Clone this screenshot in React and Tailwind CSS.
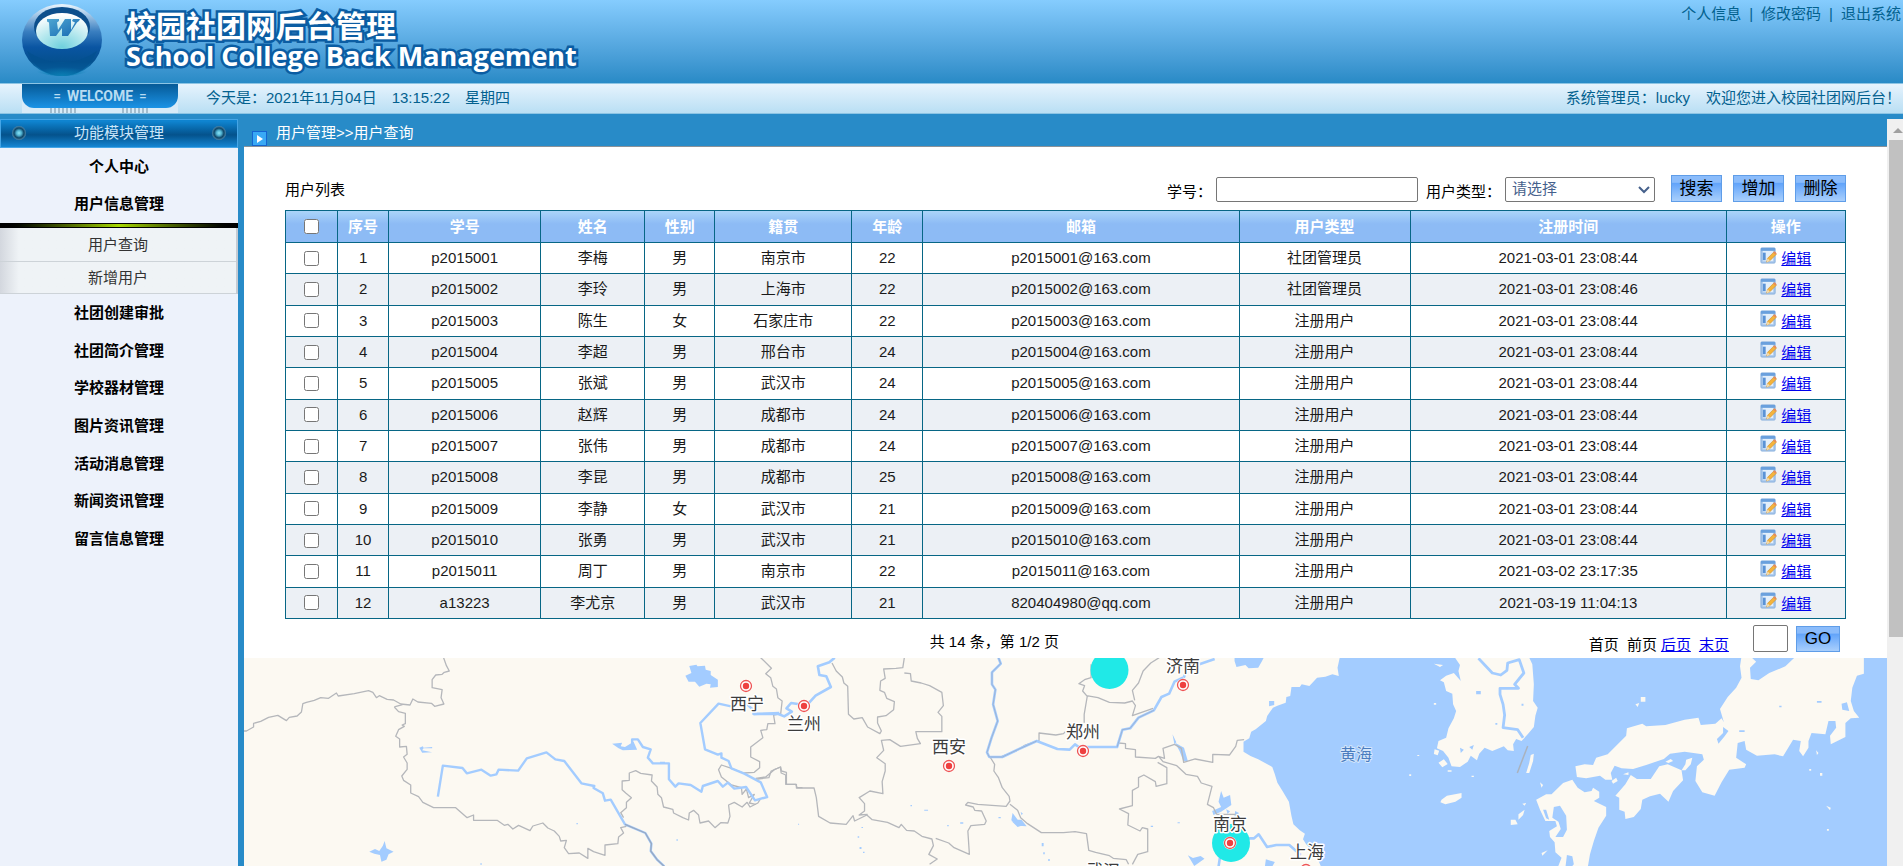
const users = [
  ['p2015001', '李梅', '男', '南京市', 22, 'p2015001@163.com', '社团管理员', '2021-03-01 23:08:44'],
  ['p2015002', '李玲', '男', '上海市', 22, 'p2015002@163.com', '社团管理员', '2021-03-01 23:08:46'],
  ['p2015003', '陈生', '女', '石家庄市', 22, 'p2015003@163.com', '注册用户', '2021-03-01 23:08:44'],
  ['p2015004', '李超', '男', '邢台市', 24, 'p2015004@163.com', '注册用户', '2021-03-01 23:08:44'],
  ['p2015005', '张斌', '男', '武汉市', 24, 'p2015005@163.com', '注册用户', '2021-03-01 23:08:44'],
  ['p2015006', '赵辉', '男', '成都市', 24, 'p2015006@163.com', '注册用户', '2021-03-01 23:08:44'],
  ['p2015007', '张伟', '男', '成都市', 24, 'p2015007@163.com', '注册用户', '2021-03-01 23:08:44'],
  ['p2015008', '李昆', '男', '成都市', 25, 'p2015008@163.com', '注册用户', '2021-03-01 23:08:44'],
  ['p2015009', '李静', '女', '武汉市', 21, 'p2015009@163.com', '注册用户', '2021-03-01 23:08:44'],
  ['p2015010', '张勇', '男', '武汉市', 21, 'p2015010@163.com', '注册用户', '2021-03-01 23:08:44'],
  ['p2015011', '周丁', '男', '南京市', 22, 'p2015011@163.com', '注册用户', '2021-03-02 23:17:35'],
  ['a13223', '李尤京', '男', '武汉市', 21, '820404980@qq.com', '注册用户', '2021-03-19 11:04:13'],
];

const columns = [
  { label: '序号', width: 'w-[51px]' },
  { label: '学号', width: 'w-[152px]' },
  { label: '姓名', width: 'w-[104px]' },
  { label: '性别', width: 'w-[70px]' },
  { label: '籍贯', width: 'w-[137px]' },
  { label: '年龄', width: 'w-[71px]' },
  { label: '邮箱', width: 'w-[316px]' },
  { label: '用户类型', width: 'w-[171px]' },
  { label: '注册时间', width: 'w-[316px]' },
  { label: '操作', width: 'w-[119px]' },
];

function Logo() {
  return (
    <svg width="80" height="74" viewBox="0 0 80 74" aria-hidden="true">
      <defs>
        <linearGradient id="ball" x1="0" y1="0" x2="0" y2="1">
          <stop offset="0" stopColor="#eef6fd" />
          <stop offset="0.14" stopColor="#a9cbe9" />
          <stop offset="0.38" stopColor="#3a7fc0" />
          <stop offset="0.6" stopColor="#0a55a2" />
          <stop offset="0.8" stopColor="#04508f" />
          <stop offset="1" stopColor="#1284c0" />
        </linearGradient>
        <radialGradient id="glow" cx="0.5" cy="1" r="0.5">
          <stop offset="0" stopColor="#0a7fb4" />
          <stop offset="1" stopColor="#0a7fb4" stopOpacity="0" />
        </radialGradient>
        <radialGradient id="lens" cx="0.5" cy="0.95" r="0.9">
          <stop offset="0" stopColor="#6fd0dd" />
          <stop offset="0.5" stopColor="#b5e8ee" />
          <stop offset="1" stopColor="#ffffff" />
        </radialGradient>
        <linearGradient id="mark" x1="0" y1="0" x2="1" y2="1">
          <stop offset="0" stopColor="#4fa7d2" />
          <stop offset="1" stopColor="#1668b2" />
        </linearGradient>
      </defs>
      <ellipse cx="40" cy="37" rx="40" ry="36" fill="url(#ball)" />
      <path d="M5 48 Q40 72 75 48 Q64 73 40 73 Q16 73 5 48Z" fill="#03508f" opacity="0.7" />
      <ellipse cx="40" cy="64" rx="30" ry="9" fill="url(#glow)" />
      <ellipse cx="40" cy="24" rx="28" ry="20" fill="#0c4f8c" />
      <ellipse cx="40" cy="28" rx="26" ry="18" fill="url(#lens)" />
      <path
        fill="url(#mark)"
        d="M25 16H37V18L35 19.500 36 27 43 16H49L49 27 53 19.500 50 18 51 16H58L57 18 55 19.500 46 33H40L40 25 34 33H28L27 19.500 25 18.500Z"
      />
    </svg>
  );
}

function EditIcon() {
  return (
    <svg className="mr-1 inline align-baseline" width="17" height="17" viewBox="0 0 18 18" aria-hidden="true">
      <rect x="1" y="1" width="15" height="16" rx="1" fill="#a9c8ec" stroke="#86aedd" />
      <rect x="3" y="4" width="11" height="11" fill="#e3effb" />
      <rect x="1" y="1" width="15" height="3" fill="#6aa0dd" />
      <rect x="3" y="6" width="3" height="8" fill="#5b93d6" />
      <path d="M7 16l1-4 7-7 2.500 2.500-7 7z" fill="#f4b43c" stroke="#c98a2b" strokeWidth="0.6" />
      <path d="M8 12l2.500 2.500-3.500 2z" fill="#f3dcae" />
      <path d="M14 6l1.500-1.500 2 2-1.500 1.500z" fill="#e88a5c" />
    </svg>
  );
}

function Rivet() {
  return (
    <svg width="16" height="16" viewBox="0 0 16 16" aria-hidden="true">
      <defs>
        <radialGradient id="rivet">
          <stop offset="0" stopColor="#8be6f5" />
          <stop offset="0.35" stopColor="#52b4d4" />
          <stop offset="0.7" stopColor="#0c4568" />
          <stop offset="1" stopColor="#4f86a8" />
        </radialGradient>
      </defs>
      <circle cx="8" cy="8" r="7" fill="url(#rivet)" />
    </svg>
  );
}

const cities = [
  { name: '西宁', x: 746, y: 685, tx: 747, ty: 709 },
  { name: '兰州', x: 804, y: 705, tx: 804, ty: 729 },
  { name: '西安', x: 949, y: 765, tx: 949, ty: 752 },
  { name: '郑州', x: 1083, y: 750, tx: 1083, ty: 737 },
  { name: '济南', x: 1183, y: 684, tx: 1183, ty: 671 },
  { name: '南京', x: 1230, y: 842, tx: 1230, ty: 829 },
  { name: '上海', x: 1306, y: 869, tx: 1307, ty: 857 },
  { name: '武汉', x: 1103, y: 889, tx: 1103, ty: 876 },
];

function Map() {
  return (
    <svg
      className="block min-h-0 w-full flex-1 bg-[#a3ccff] [&_path]:[vector-effect:non-scaling-stroke]"
      viewBox="244 657 1643 209"
      preserveAspectRatio="xMidYMin slice"
      role="img"
      aria-label="用户籍贯分布地图"
      strokeLinejoin="round"
    >
      {/* mainland */}
      <g transform="translate(900 560) scale(.63966 .33333)">
        <path
          fill="#fcf9f2"
          d="M-1040 285H523V300L526 318 540 312 545 322 560 320 566 300 570 285H688L684 320 686 345 676 340 665 347 652 350 640 375 628 370 625 378 612 378 610 405 604 408 603 425 590 434 583 440 574 465 572 480 556 505 549 512 546 532 537 542 537 572 548 585 560 595 570 605 582 618 586 640 590 665 598 690 608 722 612 765 615 790 625 808 633 818 630 835 635 850 650 880 660 925H-1040Z"
        />
        <path
          fill="#a3ccff"
          d="M577 420l8 0 0 12-8 4zM426 520l3 30 3-6zM430 545l14 15 6 40-7 0-6-30zM502 690l4 20 10-8 2 30-16 20-12 10-2-12 14-12-4-16zM524 750l6 6-2 30-6-6zM450 883l8 8 12-6 6 8-16 22zM572 895l14 8-6 20h-10zM176 756l8 20 6 0 8 20-14-2-10-16zM510 745l6 6-4 8z"
        />
      </g>

      {/* western region */}
      <g transform="translate(240 640) scale(.35714 .33333)" fill="none">
        <g stroke="#b5b7bb" strokeWidth="1.3">
          <path d="M0 270H18L38 258V247L58 241 80 229 106 223 130 239 138 229 160 225 172 213 176 188 186 184 208 178 226 170 248 172 270 156 275 165 320 158 360 149 372 154 382 170 390 164 412 175 430 177 450 189 476 192 484 174 498 183 536 187 545 196 571 189 563 170 566 146 538 140V116L548 102 566 100 572 94 586 90 578 74 570 50" />
          <path d="M432 198L455 191M432 198L444 212 463 217V248L454 252 460 256 444 266 436 286 447 294V318L466 316 468 340 458 348 468 366V385L453 405 458 418 478 432V456L500 467 512 484 542 500H604L620 515 636 530 654 522V538H720L740 553 750 550 764 564 780 553 812 569 820 555 848 546 862 561 880 570 894 586 898 600 914 598 908 620 920 638 950 636 974 652V622L990 632 1022 643V612L1058 608 1060 588 1074 576 1066 560 1082 556" />
          <path d="M1074 530L1066 515 1082 500V484L1096 470 1080 456 1070 446V420L1090 418 1090 396 1108 389 1122 397 1154 402 1152 420 1168 438 1170 460 1180 470 1186 498 1212 505 1214 516 1240 530 1256 537 1258 516 1270 508 1284 522 1288 546 1312 540 1330 560 1346 545 1366 546 1372 526 1368 492 1384 484 1406 498 1420 484 1428 498 1450 486 1456 476" />
          <path d="M1458 50L1488 82 1472 98 1486 110 1492 136 1502 144 1506 170 1518 180 1514 218 1494 222 1498 248 1478 248 1475 266 1458 268 1464 290 1430 318V348L1455 362V380L1440 394 1410 396 1370 380 1348 372 1340 386 1348 408 1376 432 1404 440 1406 460 1418 444 1424 470 1440 460 1426 486 1444 490" />
          <path d="M1444 412L1472 408 1496 386 1514 378 1516 390 1530 394V430H1556L1560 440H1575" />
        </g>
        <g stroke="#a3ccff" strokeWidth="2.4">
          <path d="M554 467L568 374 623 381 635 397 676 386 702 404 718 400 724 386 779 389 803 352 858 334 883 355 908 360 956 427 992 435 990 441 1016 457 1022 479 1038 476 1078 550 1135 576 1152 608 1150 630 1168 656 1188 676" />
          <path d="M1098 310V295H1114L1128 318 1150 325 1142 350 1156 367H1201V415L1219 437 1228 427 1262 432 1292 452 1296 435 1338 420 1352 437 1366 425 1384 443 1417 438 1442 478 1476 468 1458 424 1412 398 1376 382 1368 360 1348 350V337L1338 341 1302 325 1289 246 1340 188 1375 196M1400 180L1420 190 1440 210 1440 219 1510 216" />
        </g>
        <path stroke="#9aa9c0" strokeWidth="1.3" d="M1078 550L1135 576 1152 608 1150 630 1168 656 1192 680" />
        <path
          fill="#a3ccff"
          d="M1258 75L1278 71 1281 76 1302 74 1304 86 1318 90V102L1338 116V138L1316 140 1318 130 1306 128 1286 137 1274 122 1256 122 1247 104 1264 96zM1042 308L1070 305 1066 316 1078 318 1102 302 1112 326 1072 328 1060 322zM362 632L378 624 390 630 400 614 405 600 410 622 430 632 416 640 410 656 396 662 392 642 376 638zM502 320L512 316 514 320 538 318V322H514L510 328 538 334 510 335zM942 546h4v4h-4zM1222 595h4v4h-4zM673 667h4v4h-4zM1176 362h14v4h-14z"
        />
      </g>

      {/* central and eastern provinces */}
      <g transform="translate(700 650) scale(.38265 .33333)" fill="none">
        <g stroke="#b5b7bb" strokeWidth="1.3">
          <path d="M345 36L356 60 372 78 376 96 386 106 388 190 402 204 424 200 438 228 470 248 474 240 464 216V198L486 194 506 176 508 152 488 142 482 124 470 118 472 90 484 82 480 54 512 52 530 50 534 20M534 66L550 68 552 90 578 96 600 104 632 124 636 164 622 184 632 196V242H564L568 262 576 278 524 286 496 266 474 268 480 298 462 320 484 338V360L476 392 478 428 444 420 416 440 430 458V480L416 492 438 490" />
          <path d="M150 384L180 380 186 360 210 348 212 366 224 372V400H252V411H298L304 440 310 496 340 516 382 520 400 494 404 510 436 492 450 506 490 514 520 530 526 520 540 538 560 540 580 556 606 564 610 584 598 610 620 624 600 640M616 562L650 576 664 590 704 610 700 540 708 524 744 520 748 510 736 480 718 478 714 468 694 462 700 454 726 460 800 466 810 450 808 436 790 410 780 380 768 360 770 340 758 318" />
          <path d="M810 460L830 478 838 500 856 518 892 545H950L980 542 1010 548 1016 598 1034 604 1070 614 1080 622 1114 626 1120 640M1130 640L1144 610 1170 602V534L1156 530 1150 540 1118 522 1120 488 1096 474 1130 464V418L1146 408V380L1160 372 1190 392 1192 406 1220 398V350L1196 334" />
          <path d="M756 318H784L826 300 850 282 886 268V246L930 252 950 248 955 242M1004 215V190L1012 136 1000 120 1005 104 990 98 1005 86 1022 80V40M1010 134L1040 140 1070 154 1110 156 1130 150 1138 164 1130 194 1184 172M1136 148L1130 118 1146 96 1158 60 1178 36 1200 20" />
          <path d="M1094 276L1112 278 1112 292 1138 296V318L1190 322 1198 316 1214 322 1210 292 1240 280 1258 292 1264 334 1294 324 1340 334V310L1384 312 1400 286 1404 268 1422 266M1200 318L1210 332 1246 344 1270 370 1300 376 1310 396 1338 406 1326 460 1342 470 1350 490M1350 490H1405V500" />
        </g>
        <g stroke="#a3ccff" strokeWidth="2.6">
          <path d="M140 180V189H205L220 196 240 182 226 172 238 156 260 160 286 154 302 134 342 108 330 76 312 72 308 46 338 34 352 20" />
          <path d="M780 20L786 38 763 64V100L772 116 766 160 778 210 762 260 750 304 756 318H790L830 296 880 270 934 294 966 296 980 280 990 288H1090L1104 236 1124 232 1146 200 1186 178 1206 138 1226 128 1240 92 1262 80M1305 40L1345 24M1264 80L1270 64" />
          <path d="M1430 562H1448L1460 550 1482 588 1506 582H1540L1570 612M1360 610L1355 648" />
        </g>
        <path stroke="#98a8c3" strokeWidth="1" strokeOpacity="0.7" d="M780 20L786 38 763 64V100L772 116 766 160 778 210 762 260 750 304 756 318H790L830 296 880 270M1090 288L1104 236 1124 232 1146 200 1186 178" />
        <path fill="#a3ccff" d="M550 462h4v4h-4zM586 476h10v3h-10zM646 522h4v4h-4zM680 514h8v4h-8zM256 518h3v3h-3zM422 528h4v3h-4zM412 556h4v4h-4zM417 588h5v6h-5zM426 602h4v4h-4zM893 576h5v10h-5zM897 604h4v6h-4zM910 624h4v6h-4zM814 510l12 6 14 8-10 4zM838 482l6 6-4 4zM780 498h6v4h-6zM1178 524h6v4h-6zM1248 514h6v3h-6zM1486 630l10 6-10 10z" />
      </g>

      {/* Korea, Japan and the islands */}
      <g transform="translate(1300 640) scale(.38462 .33333)" fill="none">
        <path
          fill="#fcf9f2"
          d="M400 45H594L604 70 608 130 606 180 618 200 612 224 608 258 592 280 576 300 562 294 554 310 556 330 540 328 530 316 500 330 480 320 466 338 460 358 444 344 436 362 416 378 394 376 386 350 372 330 356 322 360 300 380 290 386 262 400 232 406 210 398 190 396 158 380 150 374 124 364 118 380 104 400 96 418 120 412 90 416 72z"
        />
        <path fill="#fcf9f2" d="M350 325l12 4-4 14-10-4zM360 365l14-10 10 14-14 10zM384 388h10v4h-10zM348 68l24 4-8 6zM446 404h6v4h-6zM284 400h5v5h-5zM305 342h5v3h-5zM348 186h6v5h-6z" />
        <path fill="#fcf9f2" d="M368 476L382 464 420 456 420 470 404 482 378 490 365 484zM600 342L608 338 606 360 596 396 588 396 596 366zM886 168h12v14h-12zM872 190l10-4-4 12zM624 424l8 8-4 8zM548 536l12 0 6 14-18 2zM568 520l16-14-4 16-12 14zM578 488l10-2-4 8zM628 636l16-8-14 16zM1342 328l6 8-4 6zM1352 396h6v8h-6zM1368 494l12 6-2 8zM1370 564h5v5h-5zM1324 384h5v5h-5z" />
        <path
          fill="#fcf9f2"
          d="M1148 45H1170L1186 62 1170 80 1172 114 1192 118 1220 96 1262 76 1290 45H1466V98L1448 104 1436 140 1432 180 1440 210 1454 230 1432 232 1418 246V288L1380 310 1378 284 1394 260 1392 240 1374 240 1366 280 1330 276 1322 300 1322 320 1308 346 1298 330 1302 300 1282 296 1256 346 1234 340 1188 344 1160 326 1156 300 1138 306 1134 350 1160 370 1156 380 1116 386 1096 424 1078 464 1046 454 1028 420 1032 376 1050 356 1046 340 1000 332 962 338 946 354 900 372 866 384 836 382 818 374 808 396 812 416 794 416 780 404 744 412 720 408 716 376 740 370 762 372 770 350 800 340 848 284 850 262 890 248 900 256 950 252 1000 236 1036 230 1042 252 1080 248 1096 232 1102 244 1092 204 1112 168 1134 140 1148 110 1144 76z"
        />
        <path fill="#fcf9f2" d="M934 376L956 370 992 388 996 418 970 450 958 482 936 458 910 466 890 476 886 504 868 528 846 534 844 512 830 506V470L820 464 846 430 860 402 876 414 912 414zM1004 356l16-6-4 20-14 18-10 0 10-18zM950 362l14-8 6 6-12 6zM810 420l12-10 4 10-12 8zM840 400l14-6 0 8z" />
        <path
          fill="#fcf9f2"
          d="M684 426L708 416 722 440 740 454 758 450 762 440 778 452V470L764 480 796 498V524L776 560 764 600 754 640 748 680H670L680 650 664 634 662 604 650 588 648 570 668 556 664 540 638 540 624 506 614 476 640 460 654 460z"
        />
        <path fill="#a3ccff" d="M1100 258l14 12-10 16-16 22-4-14 16-18zM660 498l16-4 16 30 2 42-10 22-20 0 14-24-6-22-16-12zM632 506l8 0 8 30-8-4zM694 642l14 4 4 24-8 10h-14zM458 150h12v10h-12zM1246 194h6v5h-6zM1142 268h14v5h-14zM1408 188l14-4 6 26-18-4zM1344 180h12v5h-12zM576 188h5v6h-5zM508 246h5v5h-5zM416 320l10 6-8 10zM440 318l12-6-4 14z" />
        <path stroke="#a3ccff" strokeWidth="2.8" d="M464 52L500 96 522 102 538 88 540 66 570 56 582 96 558 130 568 142 520 142 520 160 528 190 532 222 528 260 566 266 580 290" />
        <path stroke="#aab2be" strokeWidth="1.5" d="M592 315L565 396" />
      </g>

      <circle cx="1109.500" cy="669" r="19" fill="#20e9e7" />
      <circle cx="1231" cy="842" r="19" fill="#20e9e7" />

      {cities.map((c) => (
        <g key={c.name}>
          <circle cx={c.x} cy={c.y} r="6.500" fill="#fff" />
          <circle cx={c.x} cy={c.y} r="5.500" fill="none" stroke="#ee5555" strokeWidth="1.300" />
          <circle cx={c.x} cy={c.y} r="3.200" fill="#ee4040" />
          <text x={c.tx} y={c.ty} textAnchor="middle" fontSize="17" fill="#3c3c3c" stroke="#fff" strokeWidth="3" paintOrder="stroke">
            {c.name}
          </text>
        </g>
      ))}
      <text x="1356" y="759" textAnchor="middle" fontSize="16" fill="#4a7dc0" stroke="#d5e6fb" strokeWidth="2" paintOrder="stroke">
        黄海
      </text>
    </svg>
  );
}

const titleText =
  "font-['Open_Sans','Noto_Sans_CJK_SC',sans-serif] font-bold text-white [paint-order:stroke_fill] [-webkit-text-stroke:5px_#0b5da3]";
const buttonStyle =
  'border border-[#5f9de8] bg-linear-to-b from-[#8bbcfb] from-25% via-[#62a4fa] via-30% to-[#a9cffc] text-[17px] leading-6 text-black';

function MenuItem({ children }) {
  return (
    <a href="#" className="flex items-center justify-center font-bold text-black">
      {children}
    </a>
  );
}

function Sidebar() {
  return (
    <nav className="w-[238px] shrink-0 bg-[#edf2fb]">
      <h2 className="flex h-[29px] items-center justify-between border border-[#45a5e6] bg-linear-to-b from-[#0f84d0] from-5% via-[#04528c] via-55% to-[#1587d4] px-2.5 pb-0.5 text-[#c9e6fa]">
        <Rivet />
        功能模块管理
        <Rivet />
      </h2>
      <div className="grid h-[75px] auto-rows-fr">
        <MenuItem>个人中心</MenuItem>
        <MenuItem>用户信息管理</MenuItem>
      </div>
      <div className="h-[5px] border-y border-black bg-linear-to-r from-black via-[#a8d900] to-black" />
      <div className="border-r-2 border-[#c5cbd3] bg-linear-to-r from-[#d3d7de] via-[#eff3f6] via-8% to-[#eff3f6]">
        <a href="#" className="flex h-[34px] items-center justify-center border-b border-[#cdd3d8] text-[#333]">用户查询</a>
        <a href="#" className="flex h-8 items-center justify-center border-b border-[#cdd3d8] text-[#333]">新增用户</a>
      </div>
      <div className="grid h-[264px] auto-rows-fr">
        <MenuItem>社团创建审批</MenuItem>
        <MenuItem>社团简介管理</MenuItem>
        <MenuItem>学校器材管理</MenuItem>
        <MenuItem>图片资讯管理</MenuItem>
        <MenuItem>活动消息管理</MenuItem>
        <MenuItem>新闻资讯管理</MenuItem>
        <MenuItem>留言信息管理</MenuItem>
      </div>
    </nav>
  );
}

function UserTable() {
  return (
    <table className="h-[409px] w-full table-fixed border-collapse text-center text-[#1a1a1a] [&_td]:border [&_td]:border-[#076685] [&_th]:border [&_th]:border-[#076685]">
      <thead>
        <tr className="h-8 bg-linear-to-b from-[#abd5f9] via-[#8dbbf5] via-40% to-[#8dbbf5] text-white">
          <th className="w-[52px]">
            <input type="checkbox" aria-label="全选" className="mx-auto block size-[15px]" />
          </th>
          {columns.map((c) => (
            <th key={c.label} className={c.width}>{c.label}</th>
          ))}
        </tr>
      </thead>
      <tbody>
        {users.map((user, i) => (
          <tr key={user[0]} className="h-[31px] even:bg-[#ecf0f5]">
            <td>
              <input type="checkbox" aria-label={`选择 ${user[0]}`} className="mx-auto block size-[15px]" />
            </td>
            <td>{i + 1}</td>
            {user.map((value, k) => (
              <td key={k}>{value}</td>
            ))}
            <td>
              <EditIcon />
              <a href="#" className="text-[#0000ee] underline">编辑</a>
            </td>
          </tr>
        ))}
      </tbody>
    </table>
  );
}

export default function App() {
  return (
    <div className="flex h-screen flex-col overflow-hidden bg-[#288bc8] font-['Liberation_Sans','Noto_Sans_CJK_SC',sans-serif] text-[15px] leading-5">
      <header className="flex h-[83px] shrink-0 justify-between bg-linear-to-b from-[#85ccfe] to-[#288ac6]">
        <div className="flex items-start gap-6 pt-[3px] pl-[22px]">
          <Logo />
          <h1 className="pt-2">
            <span className={`block text-[30px] leading-[30px] ${titleText}`}>校园社团网后台管理</span>
            <span className={`block text-[27px] leading-[30px] ${titleText}`}>School College Back Management</span>
          </h1>
        </div>
        <div className="flex gap-2 pt-1 pr-0.5 text-[#03618f]">
          <a href="#">个人信息</a>|<a href="#">修改密码</a>|<a href="#">退出系统</a>
        </div>
      </header>

      <div className="flex h-[31px] shrink-0 justify-between border-y border-[#8cc4e4] bg-linear-to-b from-[#e6f3fd] to-[#b9dff4] text-[#03618f]">
        <div className="flex">
          <div className="ml-[22px] w-[156px] bg-[#d8ebf8]">
            <div className="flex h-6 items-center justify-center gap-1.5 rounded-b-xl bg-linear-to-b from-[#065a97] to-[#1b93e6] font-['Roboto',sans-serif] text-sm text-[#b8dcf2]">
              <span>=</span>
              <span className="font-bold">WELCOME</span>
              <span>=</span>
            </div>
            <div className="flex justify-between px-7">
              <div className="h-[5px] w-7 bg-[repeating-linear-gradient(90deg,#a3bccd_0_2px,transparent_2px_4px)]" />
              <div className="h-[5px] w-7 bg-[repeating-linear-gradient(90deg,#a3bccd_0_2px,transparent_2px_4px)]" />
            </div>
          </div>
          <div className="flex gap-[15px] pt-1 pl-7">
            <span>今天是：2021年11月04日</span>
            <span>13:15:22</span>
            <span>星期四</span>
          </div>
        </div>
        <div className="flex gap-4 pt-1 pr-0.5">
          <span>系统管理员：lucky</span>
          <span>欢迎您进入校园社团网后台！</span>
        </div>
      </div>

      <div className="flex min-h-0 flex-1 pt-[5px]">
        <Sidebar />
        <main className="ml-1.5 flex min-w-0 flex-1 flex-col bg-white">
          <div className="flex h-7 shrink-0 items-center gap-[9px] border-b border-[#8a9299] bg-[#288bc8] pl-2 text-white">
            <svg className="self-end" width="15" height="15" viewBox="0 0 15 15" aria-hidden="true">
              <rect x="0.500" y="0.500" width="14" height="14" fill="#39a9f5" stroke="#1565d0" />
              <path d="M5 4l6 4-6 4z" fill="#fff" />
            </svg>
            用户管理&gt;&gt;用户查询
          </div>

          <div className="mx-auto w-[95%] shrink-0 pt-7">
            <form className="mb-2 flex h-[27px] items-end justify-between">
              <h3 className="pb-0.5">用户列表</h3>
              <div className="flex items-end">
                <label htmlFor="number">学号：</label>
                <input id="number" className="mr-2 ml-1 h-[25px] w-[202px] rounded-xs border border-[#767676] px-1" />
                <label htmlFor="type">用户类型：</label>
                <div className="relative mr-4 ml-1">
                  <select id="type" className="block h-[25px] w-[150px] appearance-none rounded-xs border border-[#767676] bg-white pb-0.5 pl-1.5 text-[#46618c]">
                    <option>请选择</option>
                  </select>
                  <svg className="pointer-events-none absolute top-2 right-1" width="14" height="10" viewBox="0 0 14 10" aria-hidden="true">
                    <path d="M2 2l5 5 5-5" fill="none" stroke="#46618c" strokeWidth="2" />
                  </svg>
                </div>
                <div className="flex gap-[11px]">
                  <button type="button" className={`h-[27px] w-[51px] ${buttonStyle}`}>搜索</button>
                  <button type="button" className={`h-[27px] w-[51px] ${buttonStyle}`}>增加</button>
                  <button type="button" className={`h-[27px] w-[51px] ${buttonStyle}`}>删除</button>
                </div>
              </div>
            </form>

            <UserTable />

            <div className="grid h-[39px] grid-cols-[41.3%_auto_1fr] items-center">
              <span className="col-start-2 pt-1.5">共 14 条，第 1/2 页</span>
              <div className="flex items-center justify-end pr-[6px]">
                <div className="flex gap-2 pt-3">
                  <span>首页</span>
                  <span>前页</span>
                  <a href="#" className="-ml-1 text-[#0000ee] underline">后页</a>
                  <a href="#" className="text-[#0000ee] underline">末页</a>
                </div>
                <input aria-label="页码" className="ml-6 h-[27px] w-[35px] rounded-xs border border-[#767676] px-1" />
                <button type="button" className={`ml-2 h-[26px] w-11 ${buttonStyle}`}>GO</button>
              </div>
            </div>
          </div>

          <Map />
        </main>

        <div className="w-4 shrink-0 overflow-hidden bg-[#f0f0f0]" aria-hidden="true">
          <svg className="block" width="20" height="21" viewBox="0 0 20 21">
            <path d="M6 14l5-5 5 5z" fill="#a0a0a0" />
          </svg>
          <div className="ml-0.5 h-[66.5%] bg-[#c1c1c1]" />
        </div>
      </div>
    </div>
  );
}
